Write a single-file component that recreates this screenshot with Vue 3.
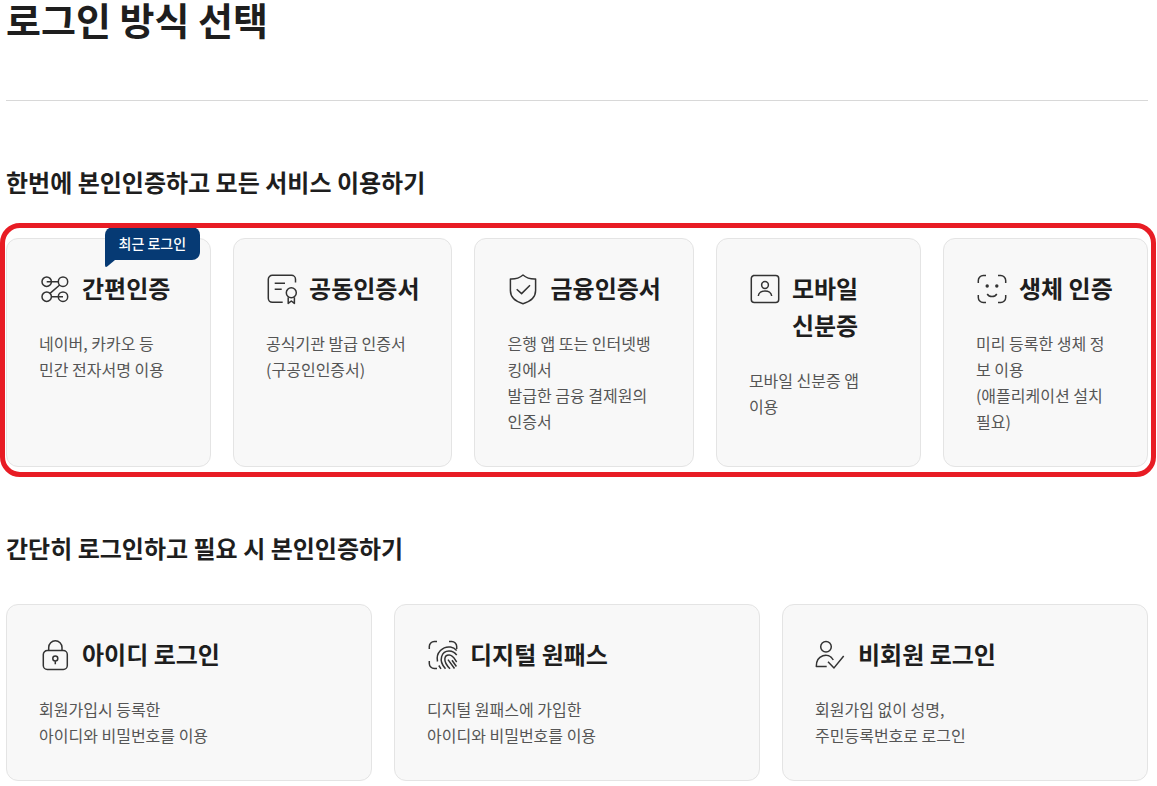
<script setup>
const primary = [
  { icon: 'nodes', title: '간편인증', lines: ['네이버, 카카오 등', '민간 전자서명 이용'], badge: '최근 로그인' },
  { icon: 'certificate', title: '공동인증서', lines: ['공식기관 발급 인증서', '(구공인인증서)'] },
  { icon: 'shield', title: '금융인증서', lines: ['은행 앱 또는 인터넷뱅킹에서', '발급한 금융 결제원의 인증서'] },
  { icon: 'idcard', title: '모바일 신분증', lines: ['모바일 신분증 앱', '이용'] },
  { icon: 'face', title: '생체 인증', lines: ['미리 등록한 생체 정보 이용', '(애플리케이션 설치 필요)'] }
]

const simple = [
  { icon: 'lock', title: '아이디 로그인', lines: ['회원가입시 등록한', '아이디와 비밀번호를 이용'] },
  { icon: 'fingerprint', title: '디지털 원패스', lines: ['디지털 원패스에 가입한', '아이디와 비밀번호를 이용'] },
  { icon: 'guest', title: '비회원 로그인', lines: ['회원가입 없이 성명,', '주민등록번호로 로그인'] }
]

const groups = [
  { id: 'verified', heading: '한번에 본인인증하고 모든 서비스 이용하기', cards: primary, framed: true },
  { id: 'simple', heading: '간단히 로그인하고 필요 시 본인인증하기', cards: simple, framed: false }
]

const icons = {
  nodes: [
    'M12.4 7.7a4.7 4.7 0 1 1-9.4 0a4.7 4.7 0 1 1 9.4 0M28.7 7.7a4.7 4.7 0 1 1-9.4 0a4.7 4.7 0 1 1 9.4 0',
    'M12.4 22.7a4.7 4.7 0 1 1-9.4 0a4.7 4.7 0 1 1 9.4 0M28.7 22.7a4.7 4.7 0 1 1-9.4 0a4.7 4.7 0 1 1 9.4 0',
    'M7.7 7.7H19.3M20.7 11L11 19.4M12.4 22.7H24'
  ],
  certificate: [
    'M29.5 8.5V5.3a4 4 0 0 0-4-4H6.3a4 4 0 0 0-4 4v19a4 4 0 0 0 4 4H16.7',
    'M8.7 9.3H19M8.7 15.2H15.7',
    'M30.3 18.7a5 5 0 1 1-10 0a5 5 0 1 1 10 0',
    'M22.2 23.2V29.4L25.3 27L28.4 29.4V23.2'
  ],
  shield: [
    'M16 1C12.5 4 8 5.2 3.4 5V16.5C3.4 23 8.5 27.5 16 29.7C23.5 27.5 28.6 23 28.6 16.5V5C24 5.2 19.5 4 16 1Z',
    'M9.7 15.2L14.6 19.6L23 11.3'
  ],
  idcard: [
    'M4.3 1.5H26.7a3 3 0 0 1 3 3V25.5a3 3 0 0 1-3 3H5.3a3 3 0 0 1-3-3V4.5a3 3 0 0 1 3-3Z',
    'M19.4 11a3.4 3.4 0 1 1-6.8 0a3.4 3.4 0 1 1 6.8 0',
    'M9.3 22C10 15.2 22 15.2 22.7 22'
  ],
  face: [
    'M2.3 9V6.5a5 5 0 0 1 5-5H10M22 1.5h2.7a5 5 0 0 1 5 5V9M29.7 21v2.5a5 5 0 0 1-5 5H22M10 28.5H7.3a5 5 0 0 1-5-5V21',
    'M11.2 20C13.3 23.4 18.7 23.4 20.8 20'
  ],
  lock: [
    'M8.3 10.5H24.3a4 4 0 0 1 4 4V25.5a4 4 0 0 1-4 4H8.3a4 4 0 0 1-4-4V14.5a4 4 0 0 1 4-4Z',
    'M9.7 10.5V7.4a6.65 6.65 0 0 1 13.3 0V10.5',
    'M18.8 18.4a2.5 2.5 0 1 1-5 0a2.5 2.5 0 1 1 5 0M16.3 21V24.3'
  ],
  fingerprint: [
    'M2.3 9V6.5a5 5 0 0 1 5-5H10M22 1.5h2.7a5 5 0 0 1 5 5V9M10 28.5H7.3a5 5 0 0 1-5-5V21',
    'M10.5 21.5C8.5 12.5 16 6 23.5 7C26 7.4 28 8.6 29.7 10.4',
    'M14 28.8L11.8 25.5M18.5 28.8C10.5 20 15 11 22 11C25.5 11 28 12.5 29.7 15.2',
    'M23 28.8C15 20.5 17.5 14.8 22.3 15C26.3 15.2 27.5 19 29.7 22',
    'M27.5 28.5L21 19.6M25 20.2L29.4 26.5'
  ],
  guest: [
    'M16.3 6.8a5.3 5.3 0 1 1-10.6 0a5.3 5.3 0 1 1 10.6 0',
    'M11.7 26.5H1.3C1 15 13.5 11.5 18.3 20',
    'M13 21.7L19 27.9L28.7 16'
  ]
}
</script>

<template>
  <main class="page">
    <h1>로그인 방식 선택</h1>
    <section v-for="group in groups" :key="group.id" class="group" :aria-labelledby="group.id">
      <h2 :id="group.id">{{ group.heading }}</h2>
      <div class="cards" :class="{ framed: group.framed }">
        <a v-for="card in group.cards" :key="card.title" class="card" href="#">
          <span v-if="card.badge" class="badge">
            {{ card.badge }}
            <svg class="tail" viewBox="0 0 10 8" aria-hidden="true"><path d="M0 0H10L2.5 6.3Q0 8 0 5Z" /></svg>
          </span>
          <h3>
            <svg class="icon" viewBox="0 0 32 32" aria-hidden="true">
              <path v-for="d in icons[card.icon]" :key="d" :d="d" />
              <template v-if="card.icon === 'face'">
                <circle class="dot" cx="11.2" cy="12" r="1.7" />
                <circle class="dot" cx="20.8" cy="12" r="1.7" />
              </template>
            </svg>
            <span class="title">{{ card.title }}</span>
          </h3>
          <p><span v-for="line in card.lines" :key="line" class="line">{{ line }}</span></p>
        </a>
      </div>
    </section>
  </main>
</template>

<style>
body {
  background: #fff;
}
</style>

<style scoped>
.page {
  padding: 0 9px 5px 6px;
  font-family: "Noto Sans CJK KR", "Noto Sans", sans-serif;
  color: #1e1e1e;
}

h1,
h2,
h3,
p {
  margin: 0;
}

h1 {
  padding-bottom: 62px;
  border-bottom: 1px solid #d8d8d8;
  font-size: 38px;
  line-height: 38px;
  font-weight: 700;
}

.group {
  padding-top: 62px;
}

h2 {
  margin-bottom: 37px;
  font-size: 24px;
  line-height: 38px;
  font-weight: 700;
}

.cards {
  position: relative;
  display: grid;
  grid-auto-flow: column;
  grid-auto-columns: 1fr;
  gap: 22px;
}

.framed::after {
  content: "";
  position: absolute;
  inset: -15px -8px -10px -6px;
  border: 5px solid #e81c24;
  border-radius: 20px;
  pointer-events: none;
}

.card {
  position: relative;
  padding: 30px 32px 32px;
  border: 1px solid #e4e4e4;
  border-radius: 12px;
  background: #f8f8f8;
  color: inherit;
  text-decoration: none;
}

h3 {
  display: flex;
  align-items: flex-start;
  gap: 11px;
  margin-bottom: 24px;
  font-size: 24px;
  line-height: 37px;
  font-weight: 700;
}

.title {
  word-break: keep-all;
}

.icon {
  flex: none;
  width: 32px;
  height: 32px;
  margin-top: 5px;
  fill: none;
  stroke: #333;
  stroke-width: 1.5;
  stroke-linejoin: round;
}

.dot {
  fill: #333;
  stroke: none;
}

p {
  font-size: 16px;
  line-height: 26px;
  color: #555;
}

.line {
  display: block;
}

.badge {
  position: absolute;
  top: -12px;
  right: 10px;
  padding: 0 14px;
  border-radius: 8px 8px 8px 0;
  background: #063a74;
  color: #fff;
  font-size: 14px;
  line-height: 33px;
  font-weight: 500;
  white-space: nowrap;
}

.tail {
  position: absolute;
  top: 100%;
  left: 0;
  width: 10px;
  height: 8px;
  fill: #063a74;
}
</style>
